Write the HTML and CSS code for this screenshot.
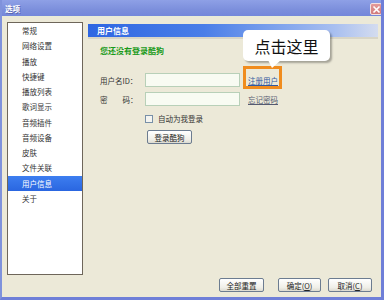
FILE: index.html
```html
<!DOCTYPE html>
<html lang="zh-CN">
  <head>
    <meta charset="UTF-8" />
    <meta name="viewport" content="width=device-width, initial-scale=1.0" />
    <title>选项</title>
    <link rel="stylesheet" href="styles.css">
  </head>
  <body>
    <div class="window">
      <div class="titlebar">
        <span class="title">选项</span>
        <span class="close">
          <svg width="9" height="9" viewBox="0 0 9 9">
            <path d="M1.5 1.5 L7.5 7.5 M7.5 1.5 L1.5 7.5" stroke="#fff" stroke-width="1.6" />
          </svg>
        </span>
      </div>
      <div class="main">
        <ul class="sidebar">
          <li>常规</li>
          <li>网络设置</li>
          <li>播放</li>
          <li>快捷键</li>
          <li>播放列表</li>
          <li>歌词显示</li>
          <li>音频插件</li>
          <li>音频设备</li>
          <li>皮肤</li>
          <li>文件关联</li>
          <li class="active">用户信息</li>
          <li>关于</li>
        </ul>
        <div class="panel">
          <div class="panel-header">用户信息</div>
          <div class="notice">您还没有登录酷狗</div>
          <div class="form-row first">
            <label class="label">用户名ID：</label>
            <input type="text" class="field" />
            <a class="link">注册用户</a>
          </div>
          <div class="form-row">
            <label class="label">密　　码：</label>
            <input type="password" class="field" />
            <a class="link muted">忘记密码</a>
          </div>
          <div class="check-row">
            <span class="checkbox"></span>
            <span>自动为我登录</span>
          </div>
          <div class="login-row">
            <button class="btn login">登录酷狗</button>
          </div>
        </div>
      </div>
      <div class="footer">
        <button class="btn reset">全部重置</button>
        <button class="btn ok">确定(<u>O</u>)</button>
        <button class="btn cancel">取消(<u>C</u>)</button>
      </div>

      <div class="highlight"></div>
      <div class="callout">
        <span class="callout-text">点击这里</span>
        <span class="tail"></span>
      </div>
    </div>
  </body>
</html>
```

FILE: styles.css
```css
* {
  box-sizing: border-box;
}
body {
  margin: 0;
  font-family: "Noto Sans CJK SC", "Noto Sans", sans-serif;
  font-size: 7.5px;
  color: #333;
}
.window {
  position: relative;
  width: 384px;
  height: 300px;
  background: #ece9d8;
  border-left: 2px solid #7f92dc;
  border-right: 3px solid #6f7fd8;
  border-bottom: 3px solid #6f7fd8;
  display: flex;
  flex-direction: column;
  overflow: hidden;
}
.titlebar {
  height: 17px;
  margin-left: -2px;
  margin-right: -3px;
  background: linear-gradient(#8ea0e6, #7c8fdc 60%, #7487da);
  border-bottom: 1px solid #e8ecd8;
  display: flex;
  align-items: center;
  justify-content: space-between;
  padding: 0 2px 0 5px;
}
.title {
  color: #fff;
  font-size: 7.5px;
  font-weight: bold;
  text-shadow: 1px 1px 0 #5a68b0;
}
.close {
  width: 12px;
  height: 12px;
  margin-top: 2px;
  background: linear-gradient(#e49a98, #d07a7c);
  border: 1px solid #f4e0e0;
  border-radius: 2px;
  display: flex;
  align-items: center;
  justify-content: center;
}
.main {
  display: flex;
  gap: 5px;
  padding: 5px 0 0 5px;
}
.sidebar {
  list-style: none;
  margin: 0;
  padding: 0;
  width: 76px;
  height: 253px;
  background: #fff;
  border: 1px solid #6e665a;
}
.sidebar li {
  height: 15.25px;
  line-height: 15.25px;
  padding-left: 14px;
  color: #333;
}
.sidebar li.active {
  background: linear-gradient(#3d7ef0, #2a66e0);
  color: #fff;
}
.panel {
  flex: 1;
  padding-top: 2px;
  margin-right: 3px;
}
.panel-header {
  height: 13px;
  line-height: 13px;
  padding-left: 9px;
  background: linear-gradient(to right, #2e66e2, #4a7ee8 40%, #a8bff0 85%, #d4dcef);
  color: #fff;
  font-weight: bold;
  font-size: 8px;
  border-bottom: 2px solid #d8d5c6;
  box-sizing: content-box;
}
.notice {
  margin: 6px 0 0 12px;
  color: #1a9a1a;
  font-weight: bold;
  font-size: 8px;
  line-height: 12px;
}
.form-row {
  display: flex;
  align-items: center;
  margin: 5px 0 0 12px;
}
.form-row.first {
  margin-top: 16px;
}
.label {
  width: 45px;
}
.field {
  width: 95px;
  height: 14px;
  margin: 0;
  border: 1px solid #b8d0b8;
  background: #f8fbf2;
  padding: 0 2px;
}
.link {
  margin-left: 8px;
  color: #3058a0;
  text-decoration: underline;
}
.link.muted {
  color: #555a70;
}
.check-row {
  display: flex;
  align-items: center;
  gap: 5px;
  margin: 7px 0 0 57px;
}
.checkbox {
  width: 8px;
  height: 8px;
  border: 1px solid #7890a8;
  background: #f4f4f0;
}
.login-row {
  margin: 6px 0 0 59px;
}
.btn {
  font-family: inherit;
  font-size: 7.5px;
  color: #222;
  height: 14px;
  padding: 0;
  border: 1px solid #6c7c90;
  border-radius: 2px;
  background: linear-gradient(#ffffff, #f0efe8 70%, #dcdad0);
}
.btn u {
  text-decoration: underline;
}
.login {
  width: 45px;
}
.footer {
  display: flex;
  justify-content: flex-end;
  margin-top: 3px;
  padding-right: 9px;
}
.reset {
  width: 45px;
  margin-right: 14px;
}
.ok {
  width: 43px;
  margin-right: 7px;
}
.cancel {
  width: 44px;
}
.highlight {
  position: absolute;
  left: 241px;
  top: 66px;
  width: 39px;
  height: 23px;
  border: 3px solid #f08c1e;
}
.callout {
  position: absolute;
  left: 241px;
  top: 30px;
  width: 87px;
  height: 31px;
  background: #fff;
  border-radius: 5px;
  box-shadow: 2px 2px 2px rgba(0, 0, 0, 0.3);
  display: flex;
  align-items: center;
  justify-content: center;
}
.callout-text {
  font-size: 16px;
  color: #111;
  line-height: 1;
}
.tail {
  position: absolute;
  left: 25px;
  top: 30px;
  width: 0;
  height: 0;
  border-left: 4px solid transparent;
  border-right: 9px solid transparent;
  border-top: 8px solid #fff;
}
```
